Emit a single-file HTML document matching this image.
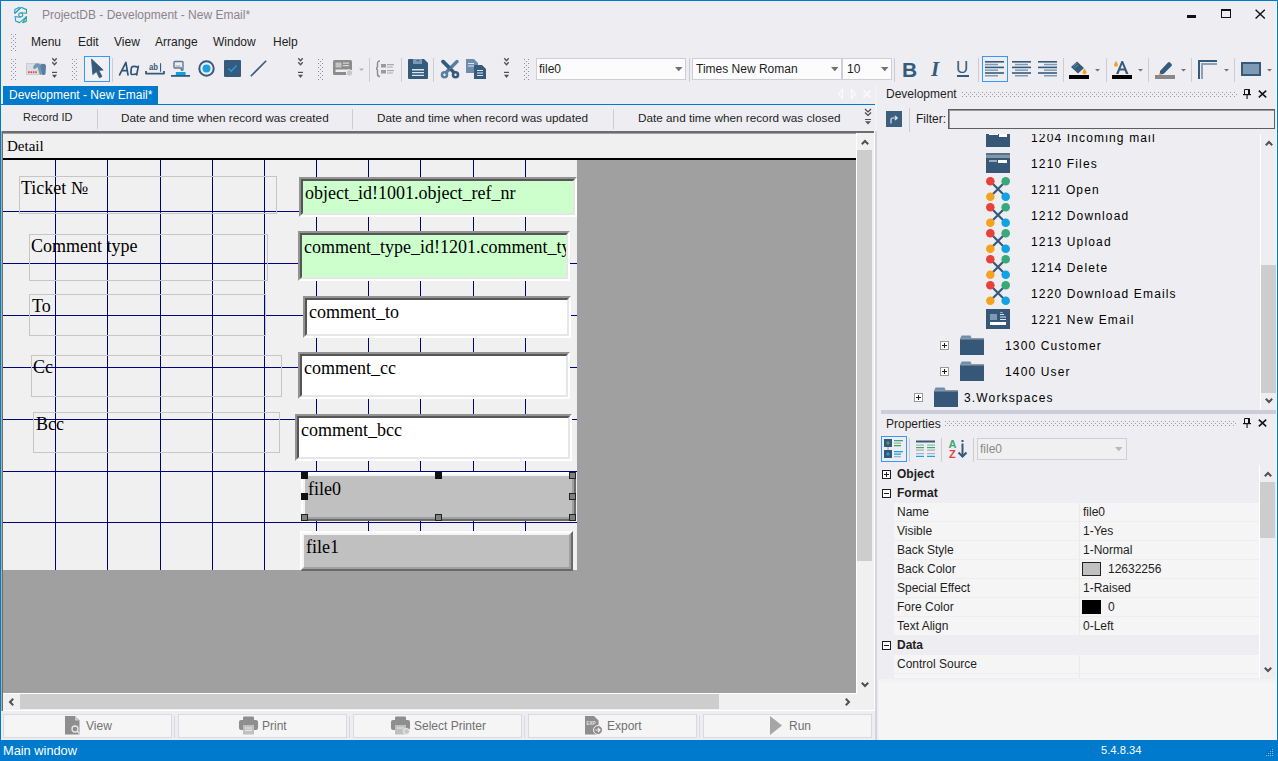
<!DOCTYPE html>
<html><head><meta charset="utf-8">
<style>
*{margin:0;padding:0;box-sizing:border-box}
html,body{width:1278px;height:761px;overflow:hidden;background:#eeeef2;font-family:"Liberation Sans",sans-serif;font-size:12px;color:#1e1e1e}
.a{position:absolute}
.t{position:absolute;white-space:nowrap;line-height:1}
.grip{position:absolute;width:5px;background-image:radial-gradient(circle,#a0a0a8 0.7px,transparent 0.8px);background-size:4px 4px}
.sep{position:absolute;width:1px;background:#ccccd4}
.ico{position:absolute}
.serif{font-family:"Liberation Serif",serif}
.gv{position:absolute;width:1px;background:#000080}
.gh{position:absolute;height:1px;background:#000080}
.lbl{position:absolute;border:1px solid #c6c6c6}
.fld{position:absolute;border-style:solid;border-width:2px;border-color:#939393 #fff #fff #939393}
.fld>div{position:absolute;left:0;top:0;right:0;bottom:0;border-style:solid;border-width:2px;border-color:#555 #e6e6e6 #e6e6e6 #555;overflow:hidden}
.ft{position:absolute;font-family:"Liberation Serif",serif;font-size:18px;line-height:1;white-space:nowrap;color:#000}
.btn{position:absolute;top:714px;height:24px;width:169px;background:#f5f5f5;border:1px solid #d9d9e2}
.btn span{position:absolute;color:#717171;font-size:12px;line-height:1;top:6px}
.bsep{position:absolute;top:716px;height:22px;width:1px;background:#d9d9e2}
.tree .t{font-size:12px;letter-spacing:1.15px;color:#000}
.prow{position:absolute;left:894px;width:365px;height:18px;background:#f5f5f5}
.pn{position:absolute;left:897px;font-size:12px;line-height:1;white-space:nowrap;color:#1e1e1e}
.pv{position:absolute;left:1083px;font-size:12px;line-height:1;white-space:nowrap;color:#1e1e1e}
.pbox{position:absolute;width:9px;height:9px;border:1px solid #1e1e1e;background:#fff}
.pbox:before{content:"";position:absolute;left:1px;top:3px;width:5px;height:1px;background:#1e1e1e}
.pbox.plus:after{content:"";position:absolute;left:3px;top:1px;width:1px;height:5px;background:#1e1e1e}
.rsd{position:absolute;border-style:solid;border-width:2px;border-color:#fff #696969 #696969 #fff}
.rsd>div{position:absolute;left:0;top:0;right:0;bottom:0;border-style:solid;border-width:2px;border-color:#f4f4f4 #a0a0a0 #a0a0a0 #f4f4f4;background:#c0c0c0;overflow:hidden}
</style></head><body>
<!-- TITLEBAR -->

<svg class="ico" style="left:10px;top:4px" width="22" height="22" viewBox="0 0 22 22">
<defs><linearGradient id="lg" x1="0" y1="0" x2="1" y2="1"><stop offset="0" stop-color="#2a9be6"/><stop offset="0.55" stop-color="#2aa3b5"/><stop offset="1" stop-color="#2fa56a"/></linearGradient>
<pattern id="gp" width="4" height="4" patternUnits="userSpaceOnUse"><rect width="1" height="1" fill="#8f8f96"/><rect x="2" y="2" width="1" height="1" fill="#8f8f96"/></pattern></defs>
<g fill="none" stroke="url(#lg)" stroke-width="1.15" stroke-linejoin="round">
<path d="M4.8 9.3 L4.8 5.6 L9 3.4 L10 4.2 Z"/>
<path d="M11.3 3.4 L16.5 5.6 L16.5 9.2 L10.6 8.8 M11.3 3.4 L5 9.4"/>
<path d="M8.8 9.8 L10.7 8.8 L12.6 9.8 L12.6 12 L10.6 13 L8.8 12 Z"/>
<path d="M4.5 12.6 L10.4 13.2 M5.2 13 L5.6 17 L9.5 18.6 L16.5 12.6"/>
<path d="M12.6 18.6 L16.5 12.6 L16.2 17.4 Z"/>
</g></svg>
<div class="t" style="left:42px;top:9px;color:#8b838c;font-size:12px">ProjectDB - Development - New Email*</div>
<div class="a" style="left:1187px;top:15px;width:9px;height:3px;background:#111"></div>
<div class="a" style="left:1221px;top:9px;width:10px;height:9px;border:1px solid #111;border-top-width:2px"></div>
<svg class="ico" style="left:1255px;top:9px" width="11" height="10" viewBox="0 0 11 10"><path d="M0.6 0.8 L9.8 9.4 M9.8 0.8 L0.6 9.4" stroke="#111" stroke-width="1.4"/></svg>

<!-- MENU -->

<svg class="ico" style="left:11px;top:34px" width="5" height="17"><rect width="5" height="17" fill="url(#gp)"/></svg>
<div class="t" style="left:31px;top:36px">Menu</div>
<div class="t" style="left:78px;top:36px">Edit</div>
<div class="t" style="left:114px;top:36px">View</div>
<div class="t" style="left:155px;top:36px">Arrange</div>
<div class="t" style="left:213px;top:36px">Window</div>
<div class="t" style="left:273px;top:36px">Help</div>

<!-- TOOLBAR -->
<!--TB-->
<svg class="ico" style="left:11px;top:59px" width="5" height="21"><rect width="5" height="21" fill="url(#gp)"/></svg>
<!-- card icon -->
<svg class="ico" style="left:26px;top:62px" width="21" height="14" viewBox="0 0 21 14">
<rect x="0.5" y="1.5" width="14" height="11" fill="#dadee3" stroke="#c6c8cc" stroke-width="0.8"/>
<g fill="#e8463f"><rect x="2" y="9.3" width="1.6" height="1.8"/><rect x="4.4" y="9.3" width="1.6" height="1.8"/><rect x="6.8" y="9.3" width="1.6" height="1.8"/><rect x="9.2" y="9.3" width="1.6" height="1.8"/></g>
<path d="M7 5.8 Q7.5 3.5 9.5 1.8 Q11 0.8 12.5 1.5 L15 3 L15.5 12.5 Q14.5 13 13.5 12 L11.5 5 Q10.5 6 9 6.8 Q7.5 7.3 7 5.8Z" fill="#7495b6"/>
<path d="M14.5 2.5 Q16 1.5 18.5 2 Q20 2.5 20 4 L19.5 12 Q19 13.2 17 13 L15.5 12.5Z" fill="#5a7e9f"/>
</svg>
<!-- chevron -->
<svg class="ico" style="left:51px;top:57px" width="7" height="22" viewBox="0 0 7 22"><path d="M1.3 1.3 L3.5 3.8 L5.7 1.3 M1.3 5.3 L3.5 7.8 L5.7 5.3" fill="none" stroke="#505050" stroke-width="1.3"/><rect x="1" y="14.8" width="5" height="1.2" fill="#505050"/><path d="M1 17.8 L6 17.8 L3.5 21Z" fill="#505050"/></svg>
<svg class="ico" style="left:72px;top:59px" width="5" height="21"><rect width="5" height="21" fill="url(#gp)"/></svg>
<!-- select -->
<div class="a" style="left:84px;top:56px;width:26px;height:26px;border:1px solid #3399ff;background:#f1f1f5"></div>
<svg class="ico" style="left:90px;top:58px" width="15" height="21" viewBox="0 0 15 21"><path d="M1.5 1 L13.2 12 L8.8 12.4 L12 18.5 L9.4 19.8 L6.4 13.6 L2.8 16.6 Z" fill="#355b7c" stroke="#355b7c" stroke-width="0.8" stroke-linejoin="round"/></svg>
<div class="sep" style="left:112px;top:58px;height:24px"></div>
<!-- Aa -->
<svg class="ico" style="left:114px;top:56px" width="30" height="24" viewBox="0 0 30 24"><g stroke="#2f5577" stroke-width="1.7" fill="none" stroke-linejoin="round" stroke-linecap="round"><path d="M5.6 18.8 L11.9 6.4 L14 18.8 M8.4 14.7 L13.3 14.7"/><path d="M24.3 10.4 L22.7 18.8 M23.9 11.2 Q21 10.1 18.6 10.6 Q17.4 10.9 17.3 12.4 L16.9 16.9 Q16.9 18.7 18.6 18.5 Q21 18.4 23 17.4"/></g></svg>
<!-- abl -->
<svg class="ico" style="left:144px;top:62px" width="22" height="14" viewBox="0 0 22 14"><text x="5" y="8.4" style="font-family:'Liberation Sans';font-size:9.5px;font-weight:bold" fill="#355b7c" textLength="9" lengthAdjust="spacingAndGlyphs">ab</text><rect x="16" y="1.2" width="1.1" height="8.5" fill="#355b7c"/><path d="M2 9 L2 11.6 L20 11.6 L20 9" fill="none" stroke="#355b7c" stroke-width="1.8" stroke-linejoin="round"/></svg>
<!-- button icon -->
<svg class="ico" style="left:171px;top:60px" width="20" height="18" viewBox="0 0 20 18"><path d="M3 2.2 Q3 1.5 3.8 1.5 L11.2 1.5 Q12 1.5 12 2.3 L12 9.5 Q12 10.3 11 10.3 Q10.3 10.3 10.3 9.5 L10.3 8 L3.8 8 Q3 8 3 7.2Z" fill="none" stroke="#5f7a93" stroke-width="1.4"/><rect x="4.5" y="5.5" width="5" height="1.2" fill="#9fb0c0"/><rect x="4.8" y="12" width="9.8" height="3.3" fill="#0fa0e0"/><rect x="0" y="15" width="19" height="1.8" fill="#355b7c"/></svg>
<!-- radio -->
<svg class="ico" style="left:198px;top:60px" width="17" height="17" viewBox="0 0 17 17"><circle cx="8.5" cy="8.5" r="7.2" fill="none" stroke="#355b7c" stroke-width="2"/><circle cx="8.5" cy="8.5" r="4" fill="#1ba1e2"/></svg>
<!-- checkbox -->
<svg class="ico" style="left:224px;top:60px" width="17" height="17" viewBox="0 0 17 17"><rect x="0" y="0" width="17" height="17" rx="1" fill="#355b7c"/><path d="M4.5 8.5 L7.2 11.2 L12.5 5.5" fill="none" stroke="#1ba1e2" stroke-width="1.3"/></svg>
<!-- line -->
<svg class="ico" style="left:250px;top:60px" width="17" height="17" viewBox="0 0 17 17"><path d="M0.8 16.2 L16.2 0.8" stroke="#355b7c" stroke-width="1.6"/></svg>
<!-- chevron -->
<svg class="ico" style="left:297px;top:57px" width="7" height="22" viewBox="0 0 7 22"><path d="M1.3 1.3 L3.5 3.8 L5.7 1.3 M1.3 5.3 L3.5 7.8 L5.7 5.3" fill="none" stroke="#505050" stroke-width="1.3"/><rect x="1" y="14.8" width="5" height="1.2" fill="#505050"/><path d="M1 17.8 L6 17.8 L3.5 21Z" fill="#505050"/></svg>
<svg class="ico" style="left:318px;top:59px" width="5" height="21"><rect width="5" height="21" fill="url(#gp)"/></svg>
<!-- form icon grey -->
<svg class="ico" style="left:333px;top:60px" width="33" height="17" viewBox="0 0 33 17"><rect x="0" y="0" width="19" height="15" rx="1.5" fill="#8c8c8c"/><rect x="2.5" y="2.5" width="6" height="5" fill="#c4c4c4"/><rect x="10" y="2.5" width="6" height="1.2" fill="#d8d8d8"/><rect x="10" y="5" width="6" height="1.2" fill="#d8d8d8"/><rect x="2.5" y="9.5" width="14" height="2.5" fill="#eee"/><circle cx="16.5" cy="13" r="3.2" fill="#c8c8c8" stroke="#eee" stroke-width="1"/><path d="M26 8.5 L31 8.5 L28.5 11Z" fill="#b0b0b8"/></svg>
<div class="sep" style="left:369px;top:58px;height:24px"></div>
<svg class="ico" style="left:376px;top:60px" width="20" height="18" viewBox="0 0 20 18"><path d="M4 1 Q1.5 1 1.5 3.5 L1.5 7 L0 8.5 L1.5 10 L1.5 14 Q1.5 16.5 4 16.5" fill="none" stroke="#8a8a8a" stroke-width="1.4"/><rect x="5" y="4" width="5" height="3.5" fill="#9a9a9a"/><rect x="11" y="4" width="7" height="1.2" fill="#aaa"/><rect x="11" y="6.5" width="6" height="1" fill="#aaa"/><rect x="5" y="10" width="5" height="3.5" fill="#9a9a9a"/><rect x="11" y="10" width="7" height="1.2" fill="#aaa"/><rect x="11" y="12.5" width="6" height="1" fill="#aaa"/></svg>
<div class="sep" style="left:401px;top:58px;height:24px"></div>
<!-- save -->
<svg class="ico" style="left:408px;top:59px" width="20" height="20" viewBox="0 0 20 20"><path d="M0 1 Q0 0 1 0 L16 0 L20 4 L20 19 Q20 20 19 20 L1 20 Q0 20 0 19Z" fill="#355b7c"/><rect x="5" y="0" width="9" height="5" fill="#7d9ab5"/><rect x="8.5" y="1.2" width="3" height="1" fill="#355b7c"/><rect x="4" y="10" width="12" height="1.5" fill="#dfe6ee"/><rect x="4" y="13" width="12" height="1.2" fill="#dfe6ee"/><rect x="4" y="15.8" width="12" height="1.2" fill="#dfe6ee"/></svg>
<div class="sep" style="left:433px;top:58px;height:24px"></div>
<!-- scissors -->
<svg class="ico" style="left:440px;top:59px" width="20" height="20" viewBox="0 0 20 20"><path d="M3 2.5 L14.5 14" stroke="#355b7c" stroke-width="3.4" stroke-linecap="round"/><path d="M17 2.5 L5.5 14" stroke="#5a7e9f" stroke-width="3.4" stroke-linecap="round"/><path d="M3 2.5 L10 9.5" stroke="#355b7c" stroke-width="3.4" stroke-linecap="round"/><circle cx="4.5" cy="15.8" r="3.8" fill="#5a7e9f"/><circle cx="4.5" cy="15.8" r="1.2" fill="#eeeef2"/><circle cx="15.5" cy="15.8" r="3.8" fill="#355b7c"/><circle cx="15.5" cy="15.8" r="1.2" fill="#eeeef2"/><circle cx="10" cy="9.3" r="0.8" fill="#7d9ab5"/></svg>
<!-- copy -->
<svg class="ico" style="left:466px;top:59px" width="21" height="20" viewBox="0 0 21 20"><path d="M0 0 L8 0 L12 4 L12 14 L0 14Z" fill="#6c8db0"/><rect x="2" y="4" width="6" height="1" fill="#dfe6ee"/><rect x="2" y="6.5" width="6" height="1" fill="#dfe6ee"/><path d="M8 6 L16 6 L20 10 L20 20 L8 20Z" fill="#355b7c"/><rect x="11" y="11" width="6" height="1" fill="#dfe6ee"/><rect x="11" y="13.5" width="6" height="1" fill="#dfe6ee"/><rect x="11" y="16" width="6" height="1" fill="#dfe6ee"/></svg>
<svg class="ico" style="left:503px;top:57px" width="7" height="22" viewBox="0 0 7 22"><path d="M1.3 1.3 L3.5 3.8 L5.7 1.3 M1.3 5.3 L3.5 7.8 L5.7 5.3" fill="none" stroke="#505050" stroke-width="1.3"/><rect x="1" y="14.8" width="5" height="1.2" fill="#505050"/><path d="M1 17.8 L6 17.8 L3.5 21Z" fill="#505050"/></svg>
<svg class="ico" style="left:524px;top:59px" width="5" height="21"><rect width="5" height="21" fill="url(#gp)"/></svg>
<!-- combos -->
<div class="a" style="left:536px;top:58px;width:150px;height:22px;background:#fcfcfc;border:1px solid #cccedb"></div>
<div class="t" style="left:539px;top:63px">file0</div>
<svg class="ico" style="left:675px;top:67px" width="8" height="5"><path d="M0 0 L7.5 0 L3.75 4.2Z" fill="#717171"/></svg>
<div class="sep" style="left:689px;top:58px;height:24px"></div>
<div class="a" style="left:692px;top:58px;width:150px;height:22px;background:#fcfcfc;border:1px solid #cccedb"></div>
<div class="t" style="left:696px;top:63px">Times New Roman</div>
<svg class="ico" style="left:831px;top:67px" width="8" height="5"><path d="M0 0 L7.5 0 L3.75 4.2Z" fill="#717171"/></svg>
<div class="a" style="left:842px;top:58px;width:50px;height:22px;background:#fcfcfc;border:1px solid #cccedb"></div>
<div class="t" style="left:847px;top:63px">10</div>
<svg class="ico" style="left:881px;top:67px" width="8" height="5"><path d="M0 0 L7.5 0 L3.75 4.2Z" fill="#717171"/></svg>
<div class="sep" style="left:894px;top:58px;height:24px"></div>
<!-- B I U -->
<div class="t" style="left:902px;top:59px;font-size:21px;font-weight:bold;color:#355b7c">B</div>
<div class="t" style="left:931px;top:59px;font-size:21px;font-style:italic;font-weight:bold;color:#355b7c;font-family:'Liberation Serif',serif">I</div>
<div class="t" style="left:956px;top:59px;font-size:17px;color:#355b7c">U</div>
<div class="a" style="left:957px;top:75px;width:12px;height:2px;background:#355b7c"></div>
<div class="sep" style="left:978px;top:58px;height:24px"></div>
<!-- align -->
<div class="a" style="left:982px;top:56px;width:26px;height:26px;border:1px solid #3399ff"></div>
<svg class="ico" style="left:985px;top:60px" width="20" height="18" viewBox="0 0 20 18"><g fill="#355b7c"><rect x="0" y="1" width="19" height="1.6"/><rect x="0" y="6.6" width="19" height="1.6"/><rect x="0" y="12.2" width="19" height="1.6"/></g><g fill="#7d9ab5"><rect x="0" y="3.8" width="13" height="1.5"/><rect x="0" y="9.4" width="13" height="1.5"/><rect x="0" y="15" width="13" height="1.5"/></g></svg>
<svg class="ico" style="left:1012px;top:60px" width="20" height="18" viewBox="0 0 20 18"><g fill="#355b7c"><rect x="0" y="1" width="19" height="1.6"/><rect x="0" y="6.6" width="19" height="1.6"/><rect x="0" y="12.2" width="19" height="1.6"/></g><g fill="#7d9ab5"><rect x="3" y="3.8" width="13" height="1.5"/><rect x="3" y="9.4" width="13" height="1.5"/><rect x="3" y="15" width="13" height="1.5"/></g></svg>
<svg class="ico" style="left:1038px;top:60px" width="20" height="18" viewBox="0 0 20 18"><g fill="#355b7c"><rect x="0" y="1" width="19" height="1.6"/><rect x="0" y="6.6" width="19" height="1.6"/><rect x="0" y="12.2" width="19" height="1.6"/></g><g fill="#7d9ab5"><rect x="6" y="3.8" width="13" height="1.5"/><rect x="6" y="9.4" width="13" height="1.5"/><rect x="6" y="15" width="13" height="1.5"/></g></svg>
<div class="sep" style="left:1063px;top:58px;height:24px"></div>
<!-- fill color -->
<svg class="ico" style="left:1068px;top:60px" width="34" height="20" viewBox="0 0 34 20"><path d="M3 7 L9 1.5 L16 8 L10 13.5Z" fill="#355b7c"/><path d="M5 6.5 L9 3 M6.5 8 L10 5" stroke="#7d9ab5" stroke-width="0.8"/><path d="M16.5 8.5 Q18.5 11 18.5 12.5 Q18.5 14.3 16.5 14.3 Q14.5 14.3 14.5 12.5 Q14.5 11 16.5 8.5Z" fill="#f0a030"/><rect x="1" y="15" width="20" height="4" fill="#000"/><path d="M27 9 L32 9 L29.5 11.5Z" fill="#717171"/></svg>
<div class="sep" style="left:1106px;top:58px;height:24px"></div>
<!-- font color -->
<svg class="ico" style="left:1112px;top:60px" width="34" height="20" viewBox="0 0 34 20"><path d="M4 14 L9.5 1 L11 1 L16.5 14 L14 14 L12.6 10.5 L7.8 10.5 L6.5 14Z M8.5 8.6 L12 8.6 L10.2 4.2Z" fill="#355b7c"/><path d="M4 1 Q6 3.5 6 5 Q6 6.8 4 6.8 Q2 6.8 2 5 Q2 3.5 4 1Z" fill="#f0a030"/><rect x="0" y="15" width="20" height="4" fill="#000"/><path d="M26 9 L31 9 L28.5 11.5Z" fill="#717171"/></svg>
<div class="sep" style="left:1148px;top:58px;height:24px"></div>
<!-- line color -->
<svg class="ico" style="left:1155px;top:60px" width="34" height="20" viewBox="0 0 34 20"><path d="M5 11 L13 2.5 Q14 1.5 15 2.5 L16.5 4 Q17.5 5 16.5 6 L8.5 14 L5 14.5Z" fill="#355b7c"/><path d="M4.5 12.5 L4 15 L6.5 14.5Z" fill="#f0a030"/><rect x="0" y="15" width="20" height="4" fill="#888"/><path d="M26 9 L31 9 L28.5 11.5Z" fill="#717171"/></svg>
<div class="sep" style="left:1191px;top:58px;height:24px"></div>
<!-- border -->
<svg class="ico" style="left:1197px;top:59px" width="34" height="21" viewBox="0 0 34 21"><path d="M2 20 L2 2 L20 2" fill="none" stroke="#355b7c" stroke-width="2"/><path d="M5 20 L5 5 L20 5" fill="none" stroke="#8aa0b5" stroke-width="2"/><path d="M27 10 L32 10 L29.5 12.5Z" fill="#717171"/></svg>
<div class="sep" style="left:1234px;top:58px;height:24px"></div>
<!-- rect -->
<svg class="ico" style="left:1241px;top:62px" width="36" height="15" viewBox="0 0 36 15"><rect x="1" y="1" width="18" height="12" fill="#7d9ab5" stroke="#355b7c" stroke-width="2"/><path d="M26 7 L31 7 L28.5 9.5Z" fill="#717171"/></svg>
<!--/TB-->
<!-- DOC -->
<!--DOC-->
<!-- tab -->
<div class="a" style="left:3px;top:86px;width:155px;height:19px;background:#007acc"></div>
<div class="t" style="left:9px;top:89px;color:#fff">Development - New Email*</div>
<div class="a" style="left:1px;top:104px;width:874px;height:1px;background:#007acc"></div>
<svg class="ico" style="left:836px;top:89px" width="36" height="10" viewBox="0 0 36 10"><path d="M6.5 0.5 L2.5 5 L6.5 9.5Z M15.5 0.5 L19.5 5 L15.5 9.5Z" fill="none" stroke="#fbfbfc" stroke-width="1.2"/><path d="M27.5 1.5 L34.5 8.5 M34.5 1.5 L27.5 8.5" stroke="#fbfbfc" stroke-width="1.6"/></svg>
<!-- header row -->
<div class="t" style="left:23px;top:112px;font-size:11px">Record ID</div>
<div class="sep" style="left:97px;top:109px;height:20px"></div>
<div class="t" style="left:121px;top:112px;font-size:11.75px">Date and time when record was created</div>
<div class="sep" style="left:352px;top:109px;height:20px"></div>
<div class="t" style="left:377px;top:112px;font-size:11.75px">Date and time when record was updated</div>
<div class="sep" style="left:613px;top:109px;height:20px"></div>
<div class="t" style="left:638px;top:112px;font-size:11.75px">Date and time when record was closed</div>
<svg class="ico" style="left:864px;top:108px" width="8" height="18" viewBox="0 0 8 18"><path d="M1 1 L4 4 L7 1 M1 4.5 L4 7.5 L7 4.5" fill="none" stroke="#444" stroke-width="1.1"/><rect x="1" y="11" width="6" height="1" fill="#555"/><path d="M1 13.3 L7 13.3 L4 16.5Z" fill="#555"/></svg>
<!-- designer frame -->
<div class="a" style="left:1px;top:131px;width:874px;height:2px;background:#6d6d6d"></div>
<div class="a" style="left:1px;top:131px;width:2px;height:580px;background:#6d6d6d;border-left:1px solid #b5aca4"></div>
<div class="a" style="left:3px;top:133px;width:871px;height:578px;background:#fff"></div>
<div class="a" style="left:3px;top:133px;width:853px;height:560px;background:#a0a0a0"></div>
<div class="a" style="left:3px;top:134px;width:853px;height:24px;background:#f0f0f0"></div>
<div class="t serif" style="left:7px;top:139px;font-size:15px;color:#000">Detail</div>
<div class="a" style="left:3px;top:158px;width:853px;height:2px;background:#000"></div>
<div class="a" style="left:3px;top:160px;width:574px;height:410px;background:#f0f0f0"></div>
<!--GRID-->
<div class="gv" style="left:55px;top:160px;height:410px"></div>
<div class="gv" style="left:107px;top:160px;height:410px"></div>
<div class="gv" style="left:160px;top:160px;height:410px"></div>
<div class="gv" style="left:212px;top:160px;height:410px"></div>
<div class="gv" style="left:264px;top:160px;height:410px"></div>
<div class="gv" style="left:316px;top:160px;height:410px"></div>
<div class="gv" style="left:368px;top:160px;height:410px"></div>
<div class="gv" style="left:420px;top:160px;height:410px"></div>
<div class="gv" style="left:473px;top:160px;height:410px"></div>
<div class="gv" style="left:525px;top:160px;height:410px"></div>
<div class="gh" style="left:3px;top:211px;width:574px"></div>
<div class="gh" style="left:3px;top:263px;width:574px"></div>
<div class="gh" style="left:3px;top:315px;width:574px"></div>
<div class="gh" style="left:3px;top:367px;width:574px"></div>
<div class="gh" style="left:3px;top:419px;width:574px"></div>
<div class="gh" style="left:3px;top:471px;width:574px"></div>
<div class="gh" style="left:3px;top:522px;width:574px"></div>
<div class="lbl" style="left:19px;top:176px;width:258px;height:38px"></div>
<div class="lbl" style="left:29px;top:234px;width:239px;height:47px"></div>
<div class="lbl" style="left:29px;top:294px;width:237px;height:42px"></div>
<div class="lbl" style="left:31px;top:355px;width:251px;height:42px"></div>
<div class="lbl" style="left:33px;top:412px;width:247px;height:41px"></div>
<div class="ft" style="left:21px;top:179px">Ticket №</div>
<div class="ft" style="left:31px;top:237px">Comment type</div>
<div class="ft" style="left:32px;top:297px">To</div>
<div class="ft" style="left:33px;top:358px">Cc</div>
<div class="ft" style="left:36px;top:415px">Bcc</div>
<div class="fld" style="left:299px;top:177px;width:278px;height:40px"><div style="background:#ccffcc"><div class="ft" style="left:2px;top:3px">object_id!1001.object_ref_nr</div></div></div>
<div class="fld" style="left:298px;top:231px;width:272px;height:50px"><div style="background:#ccffcc"><div class="ft" style="left:2px;top:3px">comment_type_id!1201.comment_type</div></div></div>
<div class="fld" style="left:303px;top:296px;width:268px;height:42px"><div style="background:#fff"><div class="ft" style="left:2px;top:3px">comment_to</div></div></div>
<div class="fld" style="left:298px;top:352px;width:272px;height:47px"><div style="background:#fff"><div class="ft" style="left:2px;top:3px">comment_cc</div></div></div>
<div class="fld" style="left:295px;top:414px;width:277px;height:47px"><div style="background:#fff"><div class="ft" style="left:2px;top:3px">comment_bcc</div></div></div>
<div class="rsd" style="left:301px;top:472px;width:275px;height:49px"><div><div class="ft" style="left:3px;top:4px">file0</div></div></div>
<div class="rsd" style="left:300px;top:531px;width:273px;height:40px"><div><div class="ft" style="left:2px;top:3px">file1</div></div></div>
<div class="a" style="left:301px;top:472px;width:7px;height:7px;background:#111"></div>
<div class="a" style="left:435px;top:472px;width:7px;height:7px;background:#111"></div>
<div class="a" style="left:569px;top:472px;width:7px;height:7px;background:#808080;border:1px solid #222"></div>
<div class="a" style="left:301px;top:493px;width:7px;height:7px;background:#111"></div>
<div class="a" style="left:569px;top:493px;width:7px;height:7px;background:#808080;border:1px solid #222"></div>
<div class="a" style="left:301px;top:514px;width:7px;height:7px;background:#808080;border:1px solid #222"></div>
<div class="a" style="left:435px;top:514px;width:7px;height:7px;background:#808080;border:1px solid #222"></div>
<div class="a" style="left:569px;top:514px;width:7px;height:7px;background:#808080;border:1px solid #222"></div>
<!--/GRID-->
<!-- v scroll -->
<div class="a" style="left:857px;top:133px;width:17px;height:561px;background:#f0f0f0"></div>
<svg class="ico" style="left:861px;top:139px" width="8" height="6" viewBox="0 0 8 6"><path d="M0.8 5.2 L4 2 L7.2 5.2" fill="none" stroke="#505050" stroke-width="2"/></svg>
<div class="a" style="left:857px;top:150px;width:15px;height:411px;background:#cdcdcd"></div>
<svg class="ico" style="left:861px;top:682px" width="8" height="6" viewBox="0 0 8 6"><path d="M0.8 0.8 L4 4 L7.2 0.8" fill="none" stroke="#505050" stroke-width="2"/></svg>
<!-- h scroll -->
<div class="a" style="left:3px;top:694px;width:871px;height:16px;background:#f0f0f0"></div>
<svg class="ico" style="left:8px;top:698px" width="6" height="8" viewBox="0 0 6 8"><path d="M5.2 0.8 L2 4 L5.2 7.2" fill="none" stroke="#505050" stroke-width="2"/></svg>
<div class="a" style="left:20px;top:694px;width:699px;height:15px;background:#cdcdcd"></div>
<svg class="ico" style="left:845px;top:698px" width="6" height="8" viewBox="0 0 6 8"><path d="M0.8 0.8 L4 4 L0.8 7.2" fill="none" stroke="#505050" stroke-width="2"/></svg>
<div class="a" style="left:875px;top:86px;width:2px;height:45px;background:#f3f3f6"></div><div class="a" style="left:874px;top:131px;width:1px;height:580px;background:#fff"></div><div class="a" style="left:875px;top:131px;width:2px;height:609px;background:#d3d4e0"></div>
<!-- bottom buttons -->
<div class="a" style="left:1px;top:711px;width:874px;height:29px;background:#eeeef2"></div>
<div class="btn" style="left:3px"></div>
<div class="bsep" style="left:174px"></div>
<div class="btn" style="left:178px"></div>
<div class="bsep" style="left:349px"></div>
<div class="btn" style="left:353px"></div>
<div class="bsep" style="left:524px"></div>
<div class="btn" style="left:528px"></div>
<div class="bsep" style="left:699px"></div>
<div class="btn" style="left:703px"></div>
<svg class="ico" style="left:65px;top:716px" width="16" height="19" viewBox="0 0 16 19"><path d="M0 0 L10 0 L14.5 4.5 L14.5 18.5 L0 18.5Z" fill="#8e8e8e"/><path d="M10 0 L14.5 4.5 L10 4.5Z" fill="#c8c8c8"/><circle cx="10" cy="13" r="3" fill="none" stroke="#e8e8e8" stroke-width="1.3"/><path d="M12 15 L14.5 17.5" stroke="#e8e8e8" stroke-width="1.5"/></svg>
<div class="t" style="left:86px;top:720px;color:#717171">View</div>
<svg class="ico" style="left:239px;top:716px" width="19" height="19" viewBox="0 0 19 19"><rect x="4" y="0.5" width="11" height="4" rx="1" fill="#8e8e8e"/><rect x="0" y="4" width="19" height="10" rx="2" fill="#8e8e8e"/><rect x="4" y="9" width="11" height="9.5" fill="#c0c0c0"/><rect x="6" y="11.5" width="7" height="1" fill="#e8e8e8"/><rect x="6" y="14" width="7" height="1" fill="#e8e8e8"/></svg>
<div class="t" style="left:262px;top:720px;color:#717171">Print</div>
<svg class="ico" style="left:391px;top:716px" width="19" height="19" viewBox="0 0 19 19"><rect x="4" y="0.5" width="11" height="4" rx="1" fill="#8e8e8e"/><rect x="0" y="4" width="19" height="10" rx="2" fill="#8e8e8e"/><rect x="4" y="9" width="11" height="9.5" fill="#c0c0c0"/><rect x="6" y="11.5" width="7" height="1" fill="#e8e8e8"/><circle cx="15.5" cy="15.5" r="3" fill="#c8c8c8" stroke="#f5f5f5" stroke-width="1"/></svg>
<div class="t" style="left:414px;top:720px;color:#717171">Select Printer</div>
<svg class="ico" style="left:585px;top:716px" width="19" height="19" viewBox="0 0 19 19"><path d="M0 0 L9 0 L13.5 4.5 L13.5 18.5 L0 18.5Z" fill="#8e8e8e"/><text x="1.5" y="9" style="font-family:'Liberation Sans';font-size:4.5px;font-weight:bold" fill="#e8e8e8">EXP</text><circle cx="13" cy="14" r="4.5" fill="#8e8e8e" stroke="#f5f5f5" stroke-width="1"/><path d="M10.5 14 L15 14 M13 12 L15 14 L13 16" fill="none" stroke="#f0f0f0" stroke-width="1.1"/></svg>
<div class="t" style="left:607px;top:720px;color:#717171">Export</div>
<svg class="ico" style="left:770px;top:716px" width="13" height="19" viewBox="0 0 13 19"><path d="M0 0 L12 9.5 L0 19Z" fill="#a6a6a6"/></svg>
<div class="t" style="left:789px;top:720px;color:#717171">Run</div>
<!--/DOC-->
<!-- RIGHT -->
<!--RIGHT-->
<div class="t" style="left:886px;top:88px">Development</div>
<svg class="ico" style="left:962px;top:92px" width="276" height="5"><defs><pattern id="gp2" width="4" height="4" patternUnits="userSpaceOnUse"><rect x="0" y="0" width="1" height="1" fill="#9a9aa2"/><rect x="2" y="2" width="1" height="1" fill="#9a9aa2"/></pattern></defs><rect width="276" height="5" fill="url(#gp2)"/></svg>
<svg class="ico" style="left:1243px;top:89px" width="8" height="10" viewBox="0 0 8 10"><path d="M1.5 0.5 L6.5 0.5 L6.5 5.5 L1.5 5.5Z" fill="none" stroke="#111" stroke-width="1"/><rect x="5" y="0.5" width="1.5" height="5" fill="#111"/><rect x="0" y="5" width="8" height="1.2" fill="#111"/><rect x="3.5" y="6" width="1.1" height="4" fill="#111"/></svg>
<svg class="ico" style="left:1258px;top:90px" width="9" height="8" viewBox="0 0 9 8"><path d="M0.8 0.6 L8.2 7.4 M8.2 0.6 L0.8 7.4" stroke="#111" stroke-width="1.5"/></svg>
<div class="a" style="left:886px;top:111px;width:16px;height:16px;background:#3c5f7f"></div>
<svg class="ico" style="left:888px;top:113px" width="12" height="12" viewBox="0 0 12 12"><path d="M3 10.5 L3 6.5 Q3 5 4.5 5 L9 5 M7 3 L9.2 5 L7 7" fill="none" stroke="#dde5ee" stroke-width="1.2"/></svg>
<div class="sep" style="left:909px;top:108px;height:24px"></div>
<div class="t" style="left:916px;top:113px">Filter:</div>
<div class="a" style="left:948px;top:109px;width:327px;height:20px;border:1px solid #5e5e5e;background:#eeeef2;box-shadow:inset 1px 1px 0 #9a9a9a"></div>
<div class="a tree" style="left:877px;top:134px;width:399px;height:276px;overflow:hidden">
<svg class="ico" style="left:109px;top:-7px" width="24" height="20" viewBox="0 0 24 20"><rect width="24" height="20" fill="#365878"/><rect x="3" y="7" width="9" height="1" fill="#fff"/><rect x="13" y="7" width="8" height="3" fill="#fff"/></svg>
<div class="t" style="left:154px;top:-2px">1204 Incoming mail</div>
<svg class="ico" style="left:109px;top:19px" width="24" height="20" viewBox="0 0 24 20"><rect width="24" height="20" fill="#365878"/><rect width="24" height="5" fill="#8596a6"/><rect y="0" width="24" height="2" fill="#56728c"/><rect x="3" y="7.5" width="8" height="1" fill="#fff"/><rect x="12" y="7" width="9" height="3" fill="#fff"/></svg>
<div class="t" style="left:154px;top:24px">1210 Files</div>
<svg class="ico" style="left:109px;top:43px" width="24" height="24" viewBox="0 0 24 24"><path d="M4 4 L20 20 M20 4 L4 20" stroke="#355b7c" stroke-width="2.2"/><circle cx="4.3" cy="4.3" r="4.3" fill="#e8413c"/><circle cx="19.7" cy="4.3" r="4.3" fill="#39a97a"/><circle cx="4.3" cy="19.7" r="4.3" fill="#f7a21d"/><circle cx="19.7" cy="19.7" r="4.3" fill="#10a2e3"/></svg>
<div class="t" style="left:154px;top:50px">1211 Open</div>
<svg class="ico" style="left:109px;top:69px" width="24" height="24" viewBox="0 0 24 24"><path d="M4 4 L20 20 M20 4 L4 20" stroke="#355b7c" stroke-width="2.2"/><circle cx="4.3" cy="4.3" r="4.3" fill="#e8413c"/><circle cx="19.7" cy="4.3" r="4.3" fill="#39a97a"/><circle cx="4.3" cy="19.7" r="4.3" fill="#f7a21d"/><circle cx="19.7" cy="19.7" r="4.3" fill="#10a2e3"/></svg>
<div class="t" style="left:154px;top:76px">1212 Download</div>
<svg class="ico" style="left:109px;top:95px" width="24" height="24" viewBox="0 0 24 24"><path d="M4 4 L20 20 M20 4 L4 20" stroke="#355b7c" stroke-width="2.2"/><circle cx="4.3" cy="4.3" r="4.3" fill="#e8413c"/><circle cx="19.7" cy="4.3" r="4.3" fill="#39a97a"/><circle cx="4.3" cy="19.7" r="4.3" fill="#f7a21d"/><circle cx="19.7" cy="19.7" r="4.3" fill="#10a2e3"/></svg>
<div class="t" style="left:154px;top:102px">1213 Upload</div>
<svg class="ico" style="left:109px;top:121px" width="24" height="24" viewBox="0 0 24 24"><path d="M4 4 L20 20 M20 4 L4 20" stroke="#355b7c" stroke-width="2.2"/><circle cx="4.3" cy="4.3" r="4.3" fill="#e8413c"/><circle cx="19.7" cy="4.3" r="4.3" fill="#39a97a"/><circle cx="4.3" cy="19.7" r="4.3" fill="#f7a21d"/><circle cx="19.7" cy="19.7" r="4.3" fill="#10a2e3"/></svg>
<div class="t" style="left:154px;top:128px">1214 Delete</div>
<svg class="ico" style="left:109px;top:147px" width="24" height="24" viewBox="0 0 24 24"><path d="M4 4 L20 20 M20 4 L4 20" stroke="#355b7c" stroke-width="2.2"/><circle cx="4.3" cy="4.3" r="4.3" fill="#e8413c"/><circle cx="19.7" cy="4.3" r="4.3" fill="#39a97a"/><circle cx="4.3" cy="19.7" r="4.3" fill="#f7a21d"/><circle cx="19.7" cy="19.7" r="4.3" fill="#10a2e3"/></svg>
<div class="t" style="left:154px;top:154px">1220 Download Emails</div>
<svg class="ico" style="left:109px;top:175px" width="24" height="20" viewBox="0 0 24 20"><rect width="24" height="20" fill="#365878"/><rect x="4" y="5" width="7" height="6" fill="#7d99b4"/><rect x="14" y="3" width="3" height="1" fill="#8ea6bc"/><rect x="14" y="5" width="4" height="1" fill="#dde5ee"/><rect x="14" y="7.5" width="6" height="1" fill="#dde5ee"/><rect x="14" y="10" width="6" height="1" fill="#dde5ee"/><rect x="4" y="13" width="16" height="3" fill="#fff"/></svg>
<div class="t" style="left:154px;top:180px">1221 New Email</div>
<svg class="ico" style="left:83px;top:201px" width="24" height="20" viewBox="0 0 24 20"><path d="M0.5 3 L1.5 0.5 L10.5 0.5 L11.5 3Z" fill="#6f8fae"/><rect y="3" width="24" height="2" fill="#8b9aa8"/><rect y="4.5" width="24" height="15.5" fill="#365878"/></svg>
<div class="t" style="left:128px;top:206px">1300 Customer</div>
<div class="pbox plus" style="left:63px;top:207px;border-color:#9a9a9a"></div>
<svg class="ico" style="left:83px;top:227px" width="24" height="20" viewBox="0 0 24 20"><path d="M0.5 3 L1.5 0.5 L10.5 0.5 L11.5 3Z" fill="#6f8fae"/><rect y="3" width="24" height="2" fill="#8b9aa8"/><rect y="4.5" width="24" height="15.5" fill="#365878"/></svg>
<div class="t" style="left:128px;top:232px">1400 User</div>
<div class="pbox plus" style="left:63px;top:233px;border-color:#9a9a9a"></div>
<svg class="ico" style="left:57px;top:253px" width="24" height="20" viewBox="0 0 24 20"><path d="M0.5 3 L1.5 0.5 L10.5 0.5 L11.5 3Z" fill="#6f8fae"/><rect y="3" width="24" height="2" fill="#8b9aa8"/><rect y="4.5" width="24" height="15.5" fill="#365878"/></svg>
<div class="t" style="left:87px;top:258px">3.Workspaces</div>
<div class="pbox plus" style="left:37px;top:259px;border-color:#9a9a9a"></div>
</div>
<div class="a" style="left:1260px;top:134px;width:1px;height:276px;background:#fff"></div>
<svg class="ico" style="left:1265px;top:140px" width="8" height="6" viewBox="0 0 8 6"><path d="M0.8 5.2 L4 2 L7.2 5.2" fill="none" stroke="#505050" stroke-width="2"/></svg>
<div class="a" style="left:1261px;top:265px;width:15px;height:128px;background:#cdcdcd"></div>
<svg class="ico" style="left:1265px;top:398px" width="8" height="6" viewBox="0 0 8 6"><path d="M0.8 0.8 L4 4 L7.2 0.8" fill="none" stroke="#505050" stroke-width="2"/></svg>
<div class="a" style="left:881px;top:410px;width:395px;height:4px;background:#ccccdb"></div>
<div class="t" style="left:886px;top:418px">Properties</div>
<svg class="ico" style="left:945px;top:421px" width="292" height="5"><rect width="292" height="5" fill="url(#gp2)"/></svg>
<svg class="ico" style="left:1243px;top:418px" width="8" height="10" viewBox="0 0 8 10"><path d="M1.5 0.5 L6.5 0.5 L6.5 5.5 L1.5 5.5Z" fill="none" stroke="#111" stroke-width="1"/><rect x="5" y="0.5" width="1.5" height="5" fill="#111"/><rect x="0" y="5" width="8" height="1.2" fill="#111"/><rect x="3.5" y="6" width="1.1" height="4" fill="#111"/></svg>
<svg class="ico" style="left:1258px;top:419px" width="9" height="8" viewBox="0 0 9 8"><path d="M0.8 0.6 L8.2 7.4 M8.2 0.6 L0.8 7.4" stroke="#111" stroke-width="1.5"/></svg>
<div class="a" style="left:881px;top:436px;width:26px;height:26px;border:1px solid #3399ff"></div>
<svg class="ico" style="left:884px;top:439px" width="20" height="20" viewBox="0 0 20 20"><rect x="0" y="0" width="8" height="8" fill="#365878"/><rect x="0" y="11" width="8" height="8" fill="#365878"/><rect x="3.5" y="8" width="1" height="3" fill="#8aa"/><path d="M4 2 L6 4 L4 6 L2 4Z" fill="#3aa876"/><path d="M4 13 L6 15 L4 17 L2 15Z" fill="#1ba1e2"/><rect x="10" y="1" width="9" height="1.3" fill="#3aa876"/><rect x="10" y="3.5" width="7" height="1.3" fill="#9ab5a5"/><rect x="10" y="6" width="7" height="1.3" fill="#3aa876"/><rect x="10" y="12" width="9" height="1.3" fill="#1ba1e2"/><rect x="10" y="14.5" width="7" height="1.3" fill="#1ba1e2"/><rect x="10" y="17" width="7" height="1.3" fill="#9ab5c5"/></svg>
<div class="sep" style="left:909px;top:438px;height:24px"></div>
<svg class="ico" style="left:916px;top:440px" width="20" height="18" viewBox="0 0 20 18"><rect x="0" y="0.5" width="19" height="2" fill="#365878"/><g><rect x="0" y="4.5" width="8" height="1.2" fill="#9ab5a5"/><rect x="11" y="4.5" width="8" height="1.2" fill="#9ab5a5"/><rect x="0" y="7" width="8" height="1.2" fill="#3aa876"/><rect x="11" y="7" width="8" height="1.2" fill="#3aa876"/><rect x="0" y="9.5" width="8" height="1.2" fill="#9ab5a5"/><rect x="11" y="9.5" width="8" height="1.2" fill="#9ab5a5"/><rect x="0" y="13" width="8" height="1.2" fill="#9ab5c5"/><rect x="11" y="13" width="8" height="1.2" fill="#9ab5c5"/><rect x="0" y="15.8" width="8" height="1.2" fill="#1ba1e2"/><rect x="11" y="15.8" width="8" height="1.2" fill="#1ba1e2"/></g></svg>
<div class="sep" style="left:941px;top:438px;height:24px"></div>
<svg class="ico" style="left:948px;top:439px" width="19" height="20" viewBox="0 0 19 20"><text x="0.5" y="8.6" style="font-family:'Liberation Sans';font-weight:bold;font-size:11px" fill="#3aa876">A</text><text x="1" y="19.2" style="font-family:'Liberation Sans';font-weight:bold;font-size:11px" fill="#e8413c">Z</text><rect x="13.5" y="1" width="2" height="2" fill="#365878"/><rect x="13.5" y="4.5" width="2" height="13" fill="#365878"/><path d="M10.5 13.5 L14.5 17.5 L18.5 13.5" fill="none" stroke="#365878" stroke-width="2"/></svg>
<div class="sep" style="left:973px;top:438px;height:24px"></div>
<div class="a" style="left:977px;top:438px;width:150px;height:22px;border:1px solid #cccedb;background:#f0f0f0"></div>
<div class="t" style="left:980px;top:443px;color:#8a8a8a">file0</div>
<svg class="ico" style="left:1115px;top:447px" width="8" height="5"><path d="M0 0 L7.5 0 L3.75 4.2Z" fill="#b8b8c0"/></svg>
<div class="pbox plus" style="left:882px;top:470px"></div>
<div class="pn" style="left:897px;top:468px;font-weight:bold">Object</div>
<div class="pbox" style="left:882px;top:489px"></div>
<div class="pn" style="left:897px;top:487px;font-weight:bold">Format</div>
<div class="prow" style="top:503px"></div>
<div class="a" style="left:1079px;top:503px;width:1px;height:18px;background:#eaeaea"></div>
<div class="pn" style="top:506px">Name</div>
<div class="pv" style="top:506px">file0</div>
<div class="prow" style="top:522px"></div>
<div class="a" style="left:1079px;top:522px;width:1px;height:18px;background:#eaeaea"></div>
<div class="pn" style="top:525px">Visible</div>
<div class="pv" style="top:525px">1-Yes</div>
<div class="prow" style="top:541px"></div>
<div class="a" style="left:1079px;top:541px;width:1px;height:18px;background:#eaeaea"></div>
<div class="pn" style="top:544px">Back Style</div>
<div class="pv" style="top:544px">1-Normal</div>
<div class="prow" style="top:560px"></div>
<div class="a" style="left:1079px;top:560px;width:1px;height:18px;background:#eaeaea"></div>
<div class="pn" style="top:563px">Back Color</div>
<div class="a" style="left:1082px;top:562px;width:19px;height:14px;background:#c0c0c0;border:1px solid #222"></div>
<div class="pv" style="left:1108px;top:563px">12632256</div>
<div class="prow" style="top:579px"></div>
<div class="a" style="left:1079px;top:579px;width:1px;height:18px;background:#eaeaea"></div>
<div class="pn" style="top:582px">Special Effect</div>
<div class="pv" style="top:582px">1-Raised</div>
<div class="prow" style="top:598px"></div>
<div class="a" style="left:1079px;top:598px;width:1px;height:18px;background:#eaeaea"></div>
<div class="pn" style="top:601px">Fore Color</div>
<div class="a" style="left:1082px;top:600px;width:19px;height:14px;background:#000"></div>
<div class="pv" style="left:1108px;top:601px">0</div>
<div class="prow" style="top:617px"></div>
<div class="a" style="left:1079px;top:617px;width:1px;height:18px;background:#eaeaea"></div>
<div class="pn" style="top:620px">Text Align</div>
<div class="pv" style="top:620px">0-Left</div>
<div class="pbox" style="left:882px;top:641px"></div>
<div class="pn" style="left:897px;top:639px;font-weight:bold">Data</div>
<div class="prow" style="top:655px"></div>
<div class="a" style="left:1079px;top:655px;width:1px;height:18px;background:#eaeaea"></div>
<div class="pn" style="top:658px">Control Source</div>
<div class="prow" style="top:674px"></div>
<div class="a" style="left:1079px;top:674px;width:1px;height:18px;background:#eaeaea"></div>
<div class="a" style="left:877px;top:678px;width:399px;height:62px;background:#eeeef2"></div>
<div class="a" style="left:879px;top:679px;width:397px;height:61px;background:#f5f5f5;border-top:3px solid #f2f2f5;border-left:1px solid #f8f8fa"></div>
<div class="a" style="left:1259px;top:465px;width:1px;height:213px;background:#fff"></div>
<svg class="ico" style="left:1264px;top:471px" width="8" height="6" viewBox="0 0 8 6"><path d="M0.8 5.2 L4 2 L7.2 5.2" fill="none" stroke="#505050" stroke-width="2"/></svg>
<div class="a" style="left:1260px;top:482px;width:15px;height:56px;background:#cdcdcd"></div>
<svg class="ico" style="left:1264px;top:667px" width="8" height="6" viewBox="0 0 8 6"><path d="M0.8 0.8 L4 4 L7.2 0.8" fill="none" stroke="#505050" stroke-width="2"/></svg>
<!--/RIGHT-->
<!-- STATUS -->
<div class="a" style="left:0;top:740px;width:1278px;height:21px;background:#007acc"></div>
<div class="t" style="left:3px;top:745px;color:#fff;font-size:12.8px">Main window</div>
<div class="t" style="left:1101px;top:745px;color:#fff;font-size:11.2px">5.4.8.34</div>
<div class="a" style="left:1265px;top:754px;width:1px;height:1px;background:#005a9e"></div><div class="a" style="left:1266px;top:755px;width:1px;height:1px;background:#6cc4ff"></div><div class="a" style="left:1267px;top:754px;width:1px;height:1px;background:#005a9e"></div><div class="a" style="left:1268px;top:755px;width:1px;height:1px;background:#6cc4ff"></div><div class="a" style="left:1269px;top:754px;width:1px;height:1px;background:#005a9e"></div><div class="a" style="left:1270px;top:755px;width:1px;height:1px;background:#6cc4ff"></div><div class="a" style="left:1271px;top:754px;width:1px;height:1px;background:#005a9e"></div><div class="a" style="left:1272px;top:755px;width:1px;height:1px;background:#6cc4ff"></div><div class="a" style="left:1267px;top:752px;width:1px;height:1px;background:#005a9e"></div><div class="a" style="left:1268px;top:753px;width:1px;height:1px;background:#6cc4ff"></div><div class="a" style="left:1269px;top:752px;width:1px;height:1px;background:#005a9e"></div><div class="a" style="left:1270px;top:753px;width:1px;height:1px;background:#6cc4ff"></div><div class="a" style="left:1271px;top:752px;width:1px;height:1px;background:#005a9e"></div><div class="a" style="left:1272px;top:753px;width:1px;height:1px;background:#6cc4ff"></div><div class="a" style="left:1269px;top:750px;width:1px;height:1px;background:#005a9e"></div><div class="a" style="left:1270px;top:751px;width:1px;height:1px;background:#6cc4ff"></div><div class="a" style="left:1271px;top:750px;width:1px;height:1px;background:#005a9e"></div><div class="a" style="left:1272px;top:751px;width:1px;height:1px;background:#6cc4ff"></div><div class="a" style="left:1271px;top:748px;width:1px;height:1px;background:#005a9e"></div><div class="a" style="left:1272px;top:749px;width:1px;height:1px;background:#6cc4ff"></div>
<!-- window border -->
<div class="a" style="left:0;top:0;width:1278px;height:1px;background:#007acc"></div>
<div class="a" style="left:0;top:0;width:1px;height:761px;background:#007acc"></div>
<div class="a" style="left:1276px;top:1px;width:1px;height:739px;background:#fcfaf8"></div>
<div class="a" style="left:1277px;top:0;width:1px;height:761px;background:#007acc"></div>

</body></html>
